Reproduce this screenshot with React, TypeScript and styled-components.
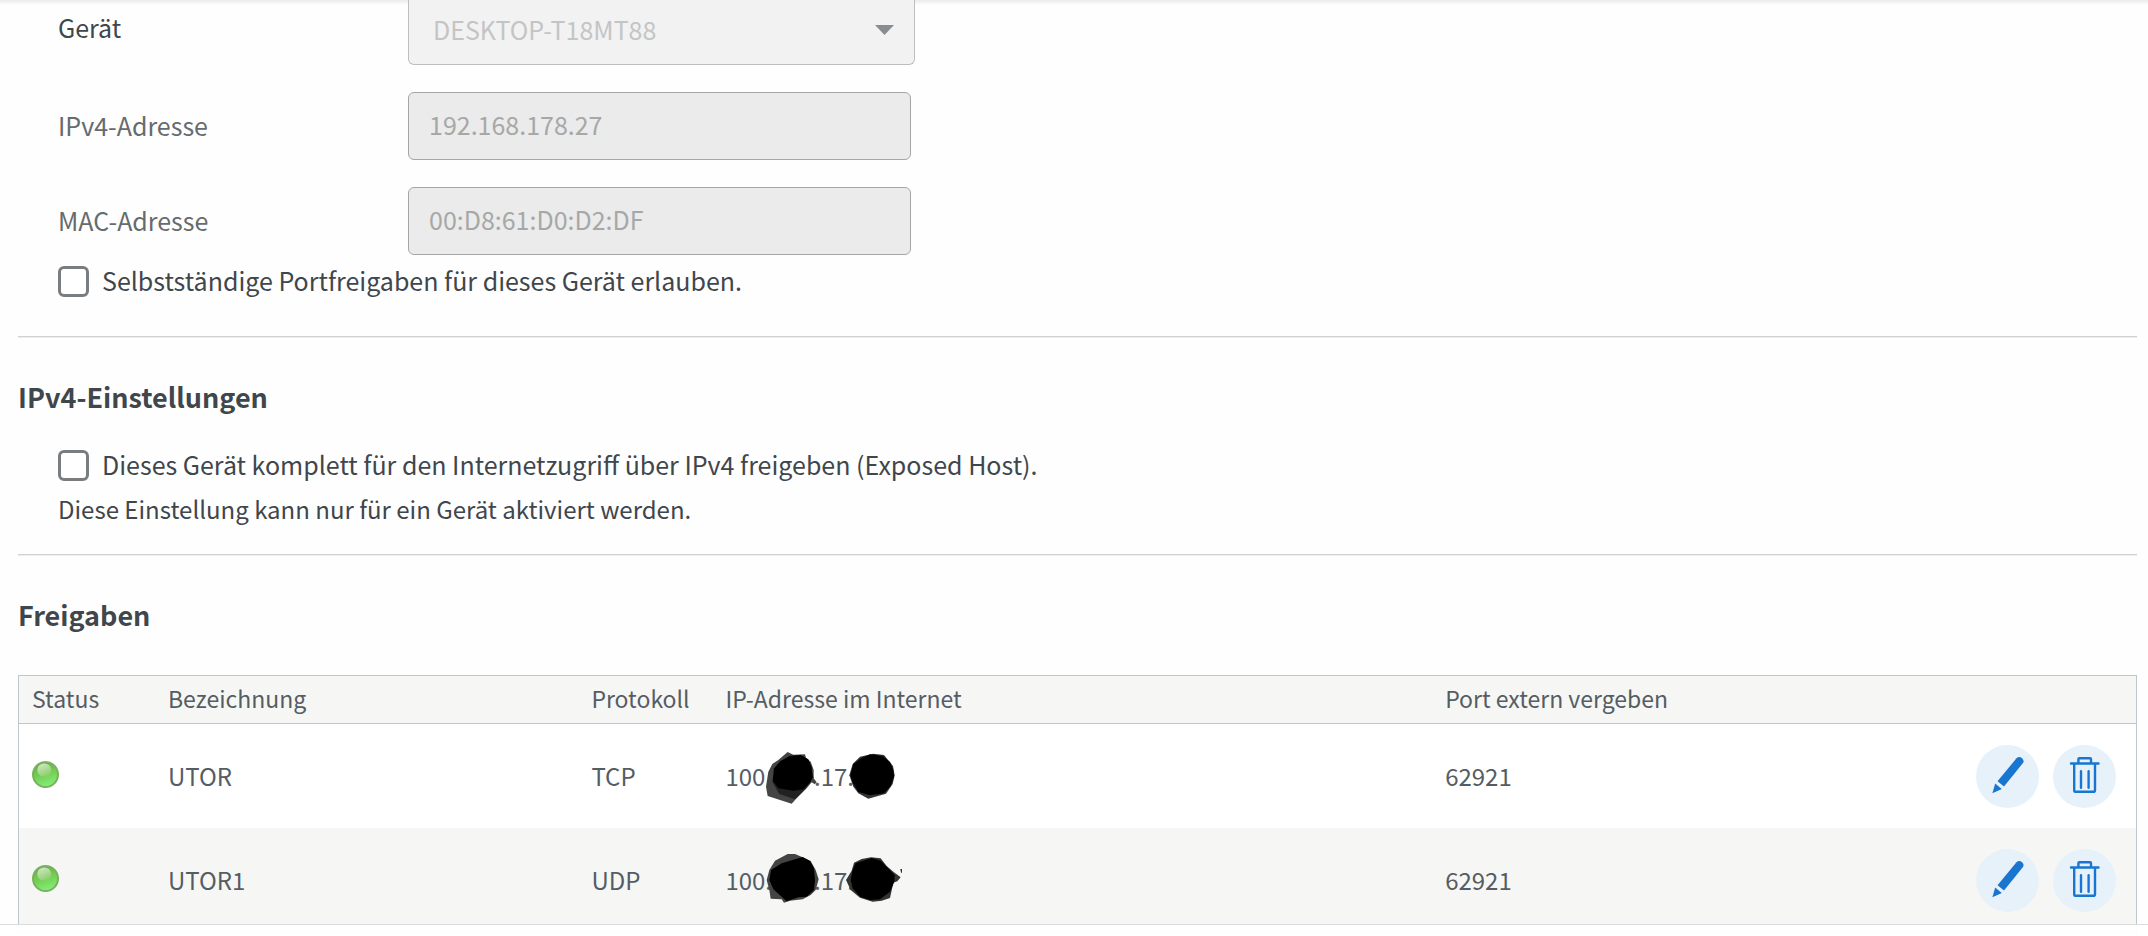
import React from "react";
import styled, { createGlobalStyle } from "styled-components";

const GlobalStyle = createGlobalStyle`
  *, *::before, *::after { box-sizing: border-box; }
  body {
    margin: 0;
    background: #fefefe;
    color: #3f464c;
    font-family: "Noto Sans CJK SC", "Open Sans", sans-serif;
    font-size: 25px;
    line-height: 32px;
  }
  button, input, select { font: inherit; }
`;

const Page = styled.main`
  padding: 0 11px 0 18px;
`;

const TopShade = styled.div`
  position: fixed;
  inset: 0 0 auto;
  height: 5px;
  background: linear-gradient(rgba(0, 0, 0, 0.08), rgba(0, 0, 0, 0));
  pointer-events: none;
`;

const BottomBar = styled.footer`
  position: fixed;
  inset: auto 0 0;
  height: 12px;
  border-top: 1px solid #d9dbdc;
  background: rgba(255, 255, 255, 0.94);
`;

const Fields = styled.div`
  display: flex;
  flex-direction: column;
  gap: 27px;
  padding-left: 40px;
`;

const FieldRow = styled.div`
  display: flex;
  align-items: center;
`;

const FieldLabel = styled.label<{ $strong?: boolean }>`
  flex: 0 0 350px;
  color: ${(p) => (p.$strong ? "#3f464c" : "#666b6d")};
  padding-bottom: ${(p) => (p.$strong ? "12px" : "2px")};
`;

const TextField = styled.input`
  width: 503px;
  height: 68px;
  padding: 0 20px 4px;
  border: 1px solid #a3a6a8;
  border-radius: 6px;
  background: #ebebeb;
  color: #a6a8a8;
`;

const SelectBox = styled.div`
  position: relative;
  width: 507px;
`;

const Select = styled.select`
  display: block;
  appearance: none;
  width: 100%;
  height: 65px;
  padding: 0 24px 6px;
  border: 1px solid #bcbec0;
  border-top: 0;
  border-radius: 0 0 6px 6px;
  background: #f2f2f2;
  color: #c3c5c5;
  opacity: 1;
`;

const Caret = styled.svg`
  position: absolute;
  right: 21px;
  top: 25px;
  width: 19px;
  height: 10px;
  fill: #888d92;
  pointer-events: none;
`;

const CheckLabel = styled.label`
  display: flex;
  align-items: flex-start;
  gap: 13px;
  margin: 11px 0 0 40px;
  height: 31px;
  line-height: 28px;
`;

const CheckBox = styled.input`
  appearance: none;
  flex: none;
  width: 31px;
  height: 31px;
  margin: 0;
  border: 3px solid #7a7d7f;
  border-radius: 6px;
  background: #fff;
`;

const Divider = styled.hr`
  height: 2px;
  margin: 39px 0 41px;
  border: 0;
  border-top: 1px solid #cfd1d2;
  background: #eeeeee;
`;

const Section = styled.section`
  h2 + ${CheckLabel} { margin-top: 35px; }
  & + ${Divider} { margin-top: 29px; }
`;

const Heading = styled.h2`
  margin: 0;
  font-size: 27px;
  line-height: 36px;
  font-weight: 600;
`;

const Hint = styled.p`
  margin: 12px 0 0 40px;
  font-size: 24px;
`;

const Table = styled.table`
  width: 100%;
  margin-top: 42px;
  table-layout: fixed;
  border: 1px solid #bdc8cc;
  border-spacing: 0;
  color: #555d64;
  font-size: 24px;
`;

const Col = styled.col<{ $width?: string }>`
  width: ${(p) => p.$width ?? "auto"};
`;

const HeadCell = styled.th`
  height: 48px;
  padding: 0 0 3px 13px;
  border-bottom: 1px solid #bdc8cc;
  background: #f6f7f5;
  font-size: 23px;
  font-weight: 400;
  text-align: left;
`;

const Row = styled.tr`
  background: #fff;
  &:nth-child(even) { background: #f6f7f5; }
`;

const Cell = styled.td`
  height: 104px;
  padding: 0 0 0 13px;
`;

const Led = styled.svg`
  display: block;
  width: 27px;
  height: 27px;
  margin-bottom: 4px;
`;

const Address = styled.div`
  position: relative;
  display: flex;
  gap: 42px;
`;

const Redaction = styled.svg`
  position: absolute;
  left: -5px;
  top: -16px;
  width: 180px;
  height: 64px;
`;

const Actions = styled.div`
  display: flex;
  justify-content: flex-end;
  gap: 14px;
  padding-right: 20px;
`;

const RoundButton = styled.button`
  width: 63px;
  height: 63px;
  padding: 0;
  border: 0;
  border-radius: 50%;
  background: #e6f1fa;
  color: #1976d0;
  svg { display: block; width: 63px; height: 63px; }
`;

const StatusLed = () => (
  <Led viewBox="0 0 27 27" role="img" aria-label="aktiv">
    <defs>
      <linearGradient id="led-body" x1="0.3" y1="0" x2="0.6" y2="1">
        <stop offset="0" stopColor="#6dab48" />
        <stop offset="0.5" stopColor="#74cf52" />
        <stop offset="1" stopColor="#84f07c" />
      </linearGradient>
      <linearGradient id="led-shine" x1="0.2" y1="0" x2="0.7" y2="1">
        <stop offset="0" stopColor="#d4e6ca" />
        <stop offset="1" stopColor="#84cf62" />
      </linearGradient>
    </defs>
    <circle cx="13.5" cy="13.5" r="12.5" fill="url(#led-body)" stroke="#78b25c" strokeWidth="2" />
    <ellipse cx="12.3" cy="9" rx="7" ry="6.6" fill="url(#led-shine)" />
  </Led>
);

const PencilIcon = () => (
  <svg viewBox="0 0 63 63" fill="currentColor" aria-hidden="true">
    <path d="M40.5 13.3Q43.2 10.8 46 13.2Q48.8 15.8 46.6 18.6L28 41.6L21.5 36.2Z" />
    <path d="M19.2 38.6L25.8 44L16.4 48.2Z" />
  </svg>
);

const TrashIcon = () => (
  <svg viewBox="0 0 63 63" fill="none" stroke="currentColor" strokeWidth="2.4" strokeLinecap="round" strokeLinejoin="round" aria-hidden="true">
    <path d="M18 18.5H45.5M25.4 18V14.2Q25.4 13.2 26.4 13.2H37Q38 13.2 38 14.2V18M21.2 19V45.2Q21.2 46.8 22.8 46.8H40.4Q42 46.8 42 45.2V19M28 26.3V42.7M35.6 26.3V42.7" />
  </svg>
);

const RedactionFirst = () => (
  <Redaction viewBox="480 252 540 192" aria-hidden="true">
    <path fill="#444" d="M683 276L700 284L735 283L738 294L752 305L761 330V355L770 367L764 373L755 367L740 385L707 418L695 431L623 408L618 380L625 335L637 312L655 300Z" />
    <path fill="#222" d="M660 303L745 300L760 352L735 388L705 418L658 402L637 366Z" />
    <path d="M662 303L690 287L722 285L745 298L755 322L758 352L750 368L730 388L700 392L655 385L638 362L642 325Z" />
    <path fill="#333" d="M900 290L940 281L972 285L999 318L1004 346L998 372L978 401L925 416L895 400L880 380L868 346L878 312Z" />
    <path d="M905 294L930 283L968 288L990 306L1000 330L1002 350L992 378L972 400L930 406L895 396L878 368L871 345L880 312Z" />
  </Redaction>
);

const RedactionSecond = () => (
  <Redaction viewBox="480 564 540 192" overflow="visible" aria-hidden="true">
    <path fill="#444" d="M683 582L705 582L728 592L752 603L767 630L776 658L767 690L752 705L728 718L690 722L672 728L665 718L632 716L628 690L620 660L628 630L645 602Z" />
    <path d="M633 630L665 610L728 591L750 603L762 625L765 660L762 690L740 710L715 712L680 724L660 706L640 688L628 660Z" />
    <path fill="#333" d="M882 608L905 597L933 592L962 595L980 618L1000 635L1022 652L1012 664L1000 668L990 714L965 722L938 725L900 713L872 690L858 660L875 632Z" />
    <path fill="#333" d="M1021 627H1026V638H1023Z" />
    <path d="M887 610L935 594L962 602L982 622L1004 646L1003 665L990 695L960 718L930 720L900 710L878 685L872 660L878 630Z" />
  </Redaction>
);

const shares = [
  { name: "UTOR", protocol: "TCP", port: "62921", Cover: RedactionFirst },
  { name: "UTOR1", protocol: "UDP", port: "62921", Cover: RedactionSecond },
];

export default function App() {
  return (
    <>
      <GlobalStyle />
      <TopShade />
      <Page>
        <Fields>
          <FieldRow>
            <FieldLabel htmlFor="device" $strong>Gerät</FieldLabel>
            <SelectBox>
              <Select id="device" disabled>
                <option>DESKTOP-T18MT88</option>
              </Select>
              <Caret viewBox="0 0 19 10" aria-hidden="true"><path d="M0 0H19L9.500 10Z" /></Caret>
            </SelectBox>
          </FieldRow>
          <FieldRow>
            <FieldLabel htmlFor="ipv4">IPv4-Adresse</FieldLabel>
            <TextField id="ipv4" type="text" defaultValue="192.168.178.27" disabled />
          </FieldRow>
          <FieldRow>
            <FieldLabel htmlFor="mac">MAC-Adresse</FieldLabel>
            <TextField id="mac" type="text" defaultValue="00:D8:61:D0:D2:DF" disabled />
          </FieldRow>
        </Fields>
        <CheckLabel>
          <CheckBox type="checkbox" />
          Selbstständige Portfreigaben für dieses Gerät erlauben.
        </CheckLabel>
        <Divider />
        <Section>
          <Heading>IPv4-Einstellungen</Heading>
          <CheckLabel>
            <CheckBox type="checkbox" />
            Dieses Gerät komplett für den Internetzugriff über IPv4 freigeben (Exposed Host).
          </CheckLabel>
          <Hint>Diese Einstellung kann nur für ein Gerät aktiviert werden.</Hint>
        </Section>
        <Divider />
        <Heading>Freigaben</Heading>
        <Table>
          <colgroup>
            <Col $width="136px" />
            <Col $width="20%" />
            <Col $width="134px" />
            <Col $width="34%" />
            <Col />
            <Col $width="200px" />
          </colgroup>
          <thead>
            <tr>
              <HeadCell scope="col">Status</HeadCell>
              <HeadCell scope="col">Bezeichnung</HeadCell>
              <HeadCell scope="col">Protokoll</HeadCell>
              <HeadCell scope="col">IP-Adresse im Internet</HeadCell>
              <HeadCell scope="col">Port extern vergeben</HeadCell>
              <HeadCell as="td" />
            </tr>
          </thead>
          <tbody>
            {shares.map(({ name, protocol, port, Cover }) => (
              <Row key={name}>
                <Cell><StatusLed /></Cell>
                <Cell>{name}</Cell>
                <Cell>{protocol}</Cell>
                <Cell>
                  <Address>
                    <span>100.</span>
                    <span>.17.</span>
                    <Cover />
                  </Address>
                </Cell>
                <Cell>{port}</Cell>
                <Cell>
                  <Actions>
                    <RoundButton type="button" aria-label="Bearbeiten"><PencilIcon /></RoundButton>
                    <RoundButton type="button" aria-label="Löschen"><TrashIcon /></RoundButton>
                  </Actions>
                </Cell>
              </Row>
            ))}
          </tbody>
        </Table>
      </Page>
      <BottomBar />
    </>
  );
}
